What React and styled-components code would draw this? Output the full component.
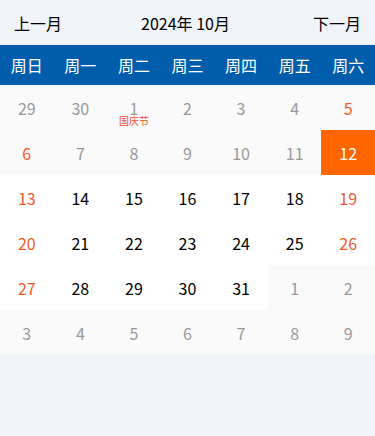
import React from 'react';
import styled, { createGlobalStyle } from 'styled-components';

const GlobalStyle = createGlobalStyle`
  html, body {
    margin: 0;
    padding: 0;
    background: #f0f3f7;
    font-family: "Noto Sans CJK SC", "Noto Sans", sans-serif;
  }
`;

const weekNames = ['周日', '周一', '周二', '周三', '周四', '周五', '周六'];

// kind: 'past' | 'other' | 'normal' | 'today'
const buildDays = () => {
  const days = [];
  [29, 30].forEach((d) => days.push({ d, kind: 'other' }));
  for (let d = 1; d <= 31; d++) {
    days.push({
      d,
      kind: d < 12 ? 'past' : d === 12 ? 'today' : 'normal',
      label: d === 1 ? '国庆节' : null,
    });
  }
  for (let d = 1; d <= 9; d++) days.push({ d, kind: 'other' });
  return days;
};

const Calendar = () => {
  const days = buildDays();
  return (
    <Wrapper>
      <GlobalStyle />
      <Header>
        <NavButton>上一月</NavButton>
        <Title>2024年 10月</Title>
        <NavButton>下一月</NavButton>
      </Header>
      <WeekBar>
        {weekNames.map((w) => (
          <WeekName key={w}>{w}</WeekName>
        ))}
      </WeekBar>
      <Grid>
        {days.map((item, i) => {
          const col = i % 7;
          const weekend = col === 0 || col === 6;
          return (
            <Cell key={i} $kind={item.kind} $weekend={weekend}>
              <DayNum>{item.d}</DayNum>
              {item.label && <Festival>{item.label}</Festival>}
            </Cell>
          );
        })}
      </Grid>
    </Wrapper>
  );
};

const Wrapper = styled.div`
  width: 375px;
  min-height: 436px;
  background: #f0f3f7;
`;

const Header = styled.div`
  height: 45px;
  display: flex;
  align-items: center;
  justify-content: space-between;
  padding: 0 14px;
  box-sizing: border-box;
  font-size: 16px;
  color: #000;
`;

const NavButton = styled.span`
  cursor: pointer;
`;

const Title = styled.span`
  margin-right: 4px;
`;

const WeekBar = styled.div`
  height: 40px;
  display: grid;
  grid-template-columns: repeat(7, 1fr);
  background: #005dac;
`;

const WeekName = styled.div`
  display: flex;
  align-items: center;
  justify-content: center;
  color: #fff;
  font-size: 16px;
`;

const Grid = styled.div`
  display: grid;
  grid-template-columns: repeat(7, 1fr);
  grid-auto-rows: 45px;
`;

const textColor = ({ $kind, $weekend }) => {
  if ($kind === 'today') return '#fff';
  if ($kind === 'other') return '#999';
  if ($weekend) return '#f05a28';
  if ($kind === 'past') return '#999';
  return '#000';
};

const Cell = styled.div`
  position: relative;
  display: flex;
  align-items: center;
  justify-content: center;
  font-size: 16px;
  color: ${textColor};
  background: ${({ $kind }) =>
    $kind === 'today' ? '#ff6600' : $kind === 'normal' ? '#fff' : '#fafafa'};
`;

const DayNum = styled.span`
  line-height: 16px;
`;

const Festival = styled.span`
  position: absolute;
  left: 0;
  right: 0;
  top: 31px;
  text-align: center;
  font-size: 10px;
  line-height: 10px;
  color: #ee4d2d;
`;

export default Calendar;
